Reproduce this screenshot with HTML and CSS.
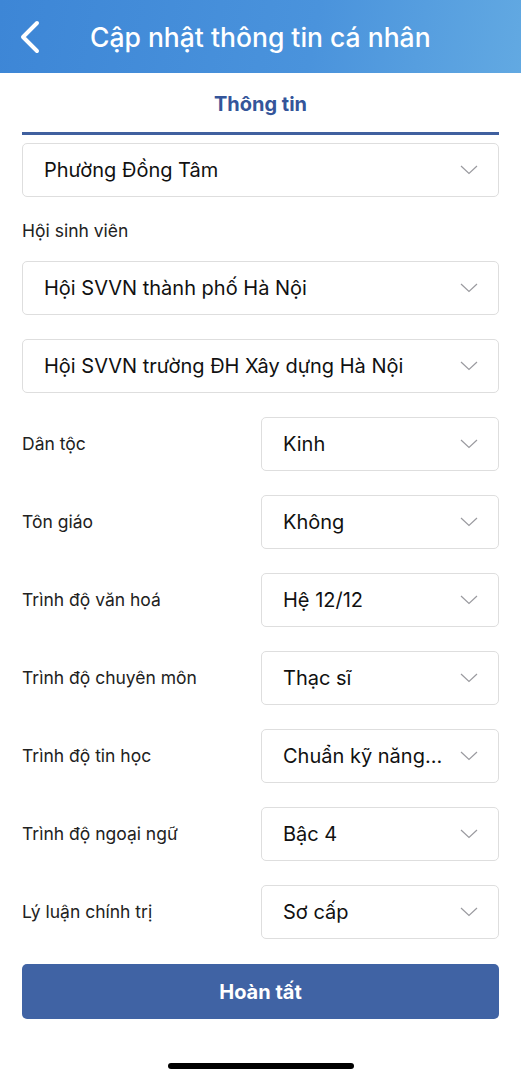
FILE: index.html
```html
<!DOCTYPE html>
<html>
  <head>
    <meta charset="UTF-8">
    <title>Cập nhật thông tin cá nhân</title>
    <link rel="stylesheet" href="styles.css">
  </head>
  <body>
    <header class="topbar">
      <svg class="back" width="24" height="34" viewBox="0 0 24 34">
        <path d="M19 3 L5 17 L19 31" fill="none" stroke="#ffffff" stroke-width="4" stroke-linecap="round" stroke-linejoin="round"/>
      </svg>
      <h1>Cập nhật thông tin cá nhân</h1>
    </header>

    <div class="tabs">
      <div class="tab active">Thông tin</div>
    </div>

    <main class="form">
      <div class="select">
        <span>Phường Đồng Tâm</span>
        <svg class="chev" width="18" height="10" viewBox="0 0 18 10"><path d="M1 1 L9 8.5 L17 1" fill="none" stroke="#9a9a9f" stroke-width="1.2"/></svg>
      </div>

      <div class="label top">Hội sinh viên</div>
      <div class="select">
        <span>Hội SVVN thành phố Hà Nội</span>
        <svg class="chev" width="18" height="10" viewBox="0 0 18 10"><path d="M1 1 L9 8.5 L17 1" fill="none" stroke="#9a9a9f" stroke-width="1.2"/></svg>
      </div>
      <div class="select">
        <span>Hội SVVN trường ĐH Xây dựng Hà Nội</span>
        <svg class="chev" width="18" height="10" viewBox="0 0 18 10"><path d="M1 1 L9 8.5 L17 1" fill="none" stroke="#9a9a9f" stroke-width="1.2"/></svg>
      </div>

      <div class="row">
        <div class="label">Dân tộc</div>
        <div class="select">
          <span>Kinh</span>
          <svg class="chev" width="18" height="10" viewBox="0 0 18 10"><path d="M1 1 L9 8.5 L17 1" fill="none" stroke="#9a9a9f" stroke-width="1.2"/></svg>
        </div>
      </div>
      <div class="row">
        <div class="label">Tôn giáo</div>
        <div class="select">
          <span>Không</span>
          <svg class="chev" width="18" height="10" viewBox="0 0 18 10"><path d="M1 1 L9 8.5 L17 1" fill="none" stroke="#9a9a9f" stroke-width="1.2"/></svg>
        </div>
      </div>
      <div class="row">
        <div class="label">Trình độ văn hoá</div>
        <div class="select">
          <span>Hệ 12/12</span>
          <svg class="chev" width="18" height="10" viewBox="0 0 18 10"><path d="M1 1 L9 8.5 L17 1" fill="none" stroke="#9a9a9f" stroke-width="1.2"/></svg>
        </div>
      </div>
      <div class="row">
        <div class="label">Trình độ chuyên môn</div>
        <div class="select">
          <span>Thạc sĩ</span>
          <svg class="chev" width="18" height="10" viewBox="0 0 18 10"><path d="M1 1 L9 8.5 L17 1" fill="none" stroke="#9a9a9f" stroke-width="1.2"/></svg>
        </div>
      </div>
      <div class="row">
        <div class="label">Trình độ tin học</div>
        <div class="select">
          <span>Chuẩn kỹ năng...</span>
          <svg class="chev" width="18" height="10" viewBox="0 0 18 10"><path d="M1 1 L9 8.5 L17 1" fill="none" stroke="#9a9a9f" stroke-width="1.2"/></svg>
        </div>
      </div>
      <div class="row">
        <div class="label">Trình độ ngoại ngữ</div>
        <div class="select">
          <span>Bậc 4</span>
          <svg class="chev" width="18" height="10" viewBox="0 0 18 10"><path d="M1 1 L9 8.5 L17 1" fill="none" stroke="#9a9a9f" stroke-width="1.2"/></svg>
        </div>
      </div>
      <div class="row">
        <div class="label">Lý luận chính trị</div>
        <div class="select">
          <span>Sơ cấp</span>
          <svg class="chev" width="18" height="10" viewBox="0 0 18 10"><path d="M1 1 L9 8.5 L17 1" fill="none" stroke="#9a9a9f" stroke-width="1.2"/></svg>
        </div>
      </div>

      <button type="button" class="done">Hoàn tất</button>
    </main>

    <div class="home-bar"></div>
  </body>
</html>
```

FILE: styles.css
```css
body {
  margin: 0;
  font-family: Inter, "Noto Sans", sans-serif;
  background-color: #ffffff;
  color: #111111;
}
.topbar {
  height: 73px;
  display: flex;
  align-items: center;
  padding-left: 18px;
  background: linear-gradient(100deg, #3d86d6 0%, #4a93dc 60%, #62a9e2 100%);
  color: #ffffff;
}
.topbar h1 {
  margin: 0 0 0 48px;
  font-size: 26.5px;
  font-weight: 500;
}
.tabs {
  margin: 0 22px;
  border-bottom: 3px solid #40609f;
}
.tab {
  height: 59px;
  display: flex;
  align-items: center;
  justify-content: center;
  padding-top: 3px;
  box-sizing: border-box;
  font-size: 20px;
  font-weight: 700;
  color: #34559a;
}
.form {
  padding: 8px 22px 0;
  display: flex;
  flex-direction: column;
  gap: 24px;
}
.select {
  height: 54px;
  box-sizing: border-box;
  border: 1px solid #dedede;
  border-radius: 5px;
  display: flex;
  align-items: center;
  justify-content: space-between;
  padding: 0 20px 0 21px;
  font-size: 20px;
  color: #111111;
}
.label {
  font-size: 17.5px;
  line-height: 20px;
  color: #222222;
}
.label.top {
  margin-bottom: -4px;
}
.row {
  display: grid;
  grid-template-columns: 239px 1fr;
  align-items: center;
}
.done {
  margin-top: 1px;
  height: 55px;
  border: none;
  border-radius: 5px;
  background-color: #4063a4;
  color: #ffffff;
  font-family: inherit;
  font-size: 20px;
  font-weight: 700;
}
.home-bar {
  width: 186px;
  height: 6px;
  border-radius: 3px;
  background-color: #000000;
  margin: 44px auto 0;
}
```
